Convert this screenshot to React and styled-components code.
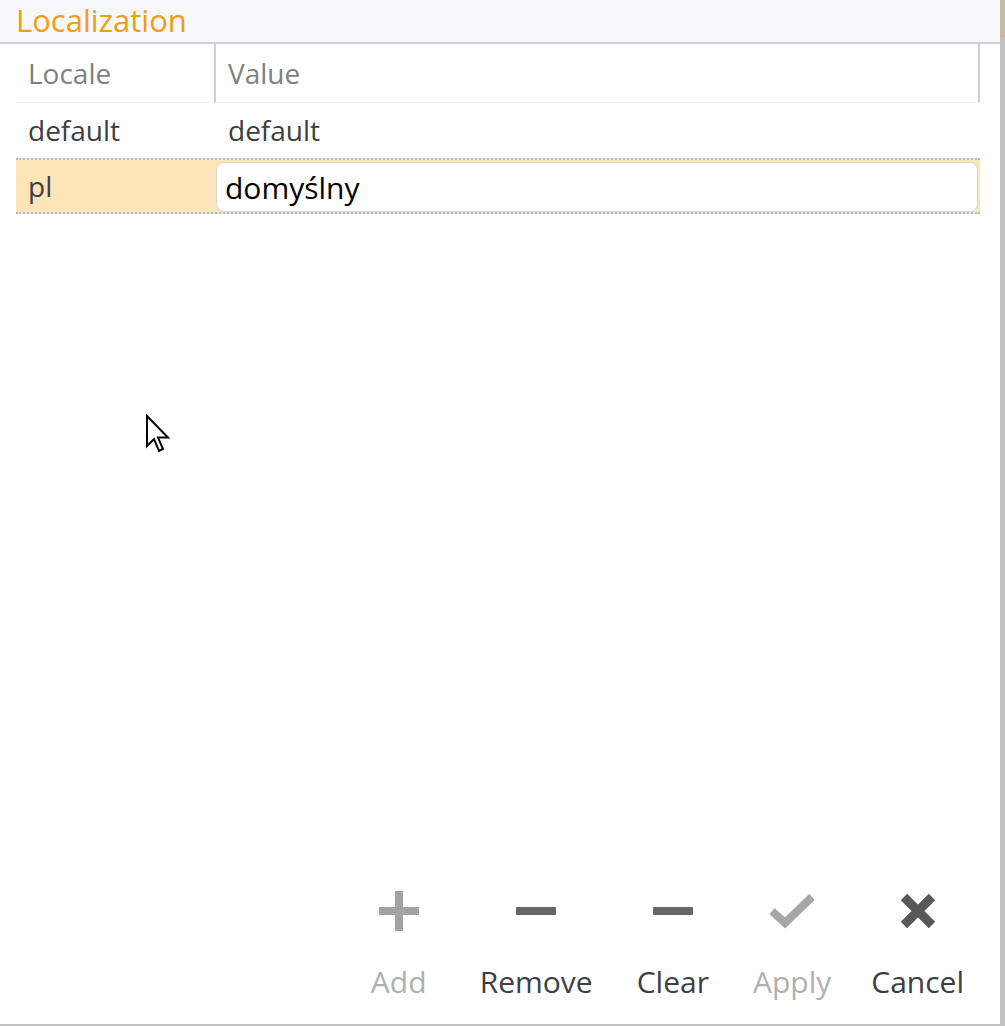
import React from 'react';
import styled, { createGlobalStyle } from 'styled-components';

const GlobalStyle = createGlobalStyle`
    html, body {
        margin: 0;
        padding: 0;
        background: #ffffff;
    }
    body {
        font-family: 'Open Sans', 'Noto Sans', sans-serif;
    }
`;

const Page = styled.div`
    display: flex;
    width: 1005px;
    height: 1026px;
    overflow: hidden;
`;

const Frame = styled.div`
    position: relative;
    display: flex;
    flex-direction: column;
    width: 1000px;
    height: 1024px;
    border-bottom: 2px solid #c0c0c0;
    background: #ffffff;
`;

const Edge = styled.div`
    width: 5px;
    height: 1026px;
    background: linear-gradient(to bottom, #c6baa6 0, #c6baa6 37px, #c0c0c0 37px);
`;

const Header = styled.div`
    height: 42px;
    display: flex;
    align-items: center;
    padding-left: 16px;
    background: #f7f9fe;
    border-bottom: 2px solid #d0d0d0;
`;

const Title = styled.h1`
    margin: 0;
    font-size: 31px;
    font-weight: 400;
    color: #f39c12;
    line-height: 1;
    padding-bottom: 1px;
`;

const Table = styled.div`
    display: flex;
    flex-direction: column;
    margin: 0 20px 0 16px;
`;

const Row = styled.div`
    display: grid;
    grid-template-columns: 198px 2px 1fr 2px;
    height: ${(p) => p.height}px;
    background: ${(p) => p.background || 'transparent'};
    border-bottom: ${(p) => p.bottom || 'none'};
    border-top: ${(p) => p.top || 'none'};
    box-sizing: border-box;
`;

const Cell = styled.div`
    display: flex;
    align-items: center;
    padding-left: 12px;
    padding-bottom: 1px;
    font-size: 28px;
    color: ${(p) => p.color || '#3c4043'};
`;

const Divider = styled.div`
    background: ${(p) => p.color || '#d0d0d0'};
`;

const Input = styled.div`
    display: flex;
    align-items: center;
    margin: 2px 0 0;
    padding-left: 8px;
    background: #ffffff;
    border: 1px solid #d8d8d8;
    border-radius: 8px;
    font-size: 30px;
    color: #000000;
`;

const Spacer = styled.div`
    flex: 1;
`;

const Toolbar = styled.div`
    display: flex;
    justify-content: flex-end;
    padding: 0 14px 22px 0;
`;

const Button = styled.button`
    display: flex;
    flex-direction: column;
    align-items: center;
    gap: 29px;
    min-width: ${(p) => p.minWidth || 0}px;
    padding: 0 22px 0 ${(p) => p.padLeft ?? 22}px;
    border: none;
    background: none;
    font-family: 'Open Sans', 'Noto Sans', sans-serif;
    font-size: 30px;
    line-height: 1.35;
    color: ${(p) => (p.disabled ? '#b0b0b0' : '#3c4043')};
    cursor: default;
`;

const Icon = styled.svg`
    width: 44px;
    height: 44px;
    display: block;
`;

const Cursor = styled.svg`
    position: absolute;
    left: 145px;
    top: 414px;
    width: 28px;
    height: 42px;
`;

const PlusIcon = () => (
    <Icon viewBox="0 0 44 44">
        <rect x="2" y="18" width="40" height="8" fill="#a2a2a2" />
        <rect x="18" y="2" width="8" height="40" fill="#a2a2a2" />
    </Icon>
);

const MinusIcon = () => (
    <Icon viewBox="0 0 44 44">
        <rect x="2" y="18" width="40" height="8" rx="1" fill="#666666" />
    </Icon>
);

const CheckIcon = () => (
    <Icon viewBox="0 0 44 44">
        <path d="M2 22 L15 34 L42 8" fill="none" stroke="#a6a6a6" strokeWidth="8" />
    </Icon>
);

const CrossIcon = () => (
    <Icon viewBox="0 0 44 44">
        <path d="M8 8 L36 36 M36 8 L8 36" fill="none" stroke="#585858" strokeWidth="9" />
    </Icon>
);

const actions = [
    { label: 'Add', icon: <PlusIcon />, disabled: true, minWidth: 118 },
    { label: 'Remove', icon: <MinusIcon /> },
    { label: 'Clear', icon: <MinusIcon /> },
    { label: 'Apply', icon: <CheckIcon />, disabled: true },
    { label: 'Cancel', icon: <CrossIcon />, padLeft: 18 },
];

const dotted = '2px dotted #a9b9e2';

const App = () => (
    <Page>
        <GlobalStyle />
        <Frame>
            <Header>
                <Title>Localization</Title>
            </Header>
            <Table>
                <Row height={59} bottom="1px solid #f2f2f2">
                    <Cell color="#808080">Locale</Cell>
                    <Divider />
                    <Cell color="#808080">Value</Cell>
                    <Divider />
                </Row>
                <Row height={55}>
                    <Cell>default</Cell>
                    <Divider color="transparent" />
                    <Cell>default</Cell>
                    <Divider color="transparent" />
                </Row>
                <Row height={56} top={dotted} bottom={dotted} background="#fde5ba">
                    <Cell>pl</Cell>
                    <Divider color="transparent" />
                    <Input>domyślny</Input>
                    <Divider color="transparent" />
                </Row>
            </Table>
            <Spacer />
            <Toolbar>
                {actions.map((a) => (
                    <Button
                        key={a.label}
                        disabled={a.disabled}
                        minWidth={a.minWidth}
                        padLeft={a.padLeft}
                    >
                        {a.icon}
                        <span>{a.label}</span>
                    </Button>
                ))}
            </Toolbar>
            <Cursor viewBox="0 0 14 21">
                <path
                    d="M1 1 L1 16 L4.5 12.5 L7 18.5 L9 17.5 L6.5 11.8 L11.5 11.8 Z"
                    fill="#ffffff"
                    stroke="#000000"
                    strokeWidth="1"
                    strokeLinejoin="miter"
                />
            </Cursor>
        </Frame>
        <Edge />
    </Page>
);

export default App;
